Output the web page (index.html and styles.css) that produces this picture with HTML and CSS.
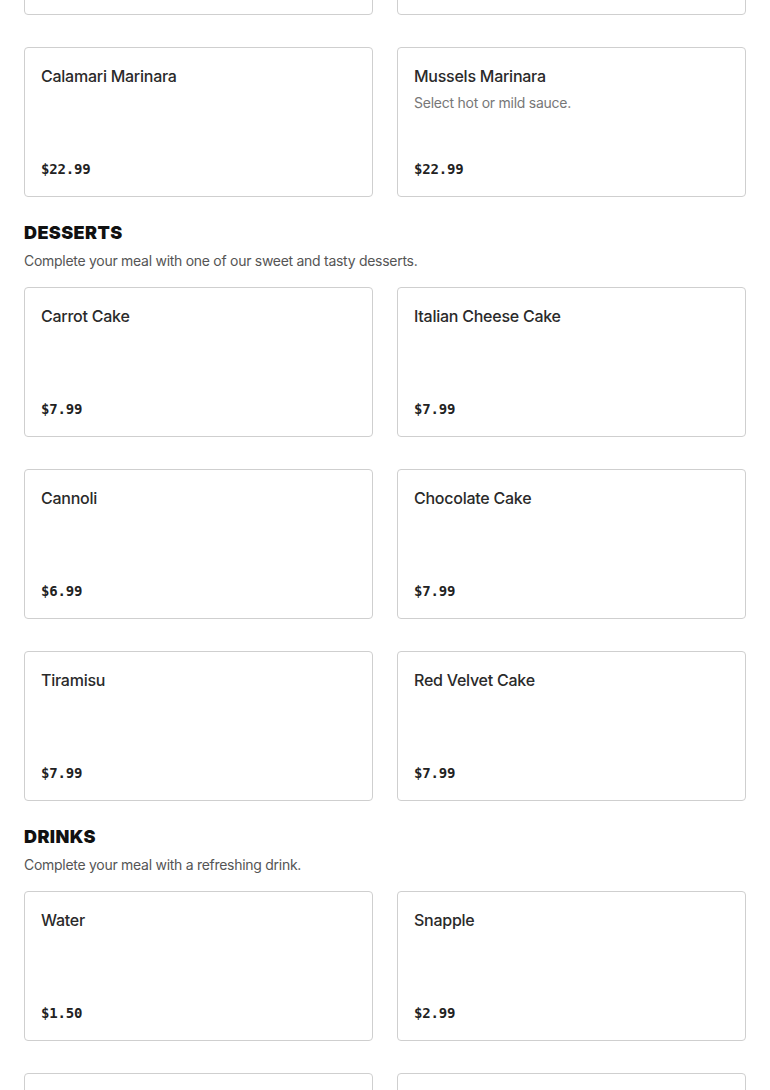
FILE: index.html
```html
<!DOCTYPE html>
<html lang="en">
<head>
    <meta charset="UTF-8">
    <meta name="viewport" content="width=device-width, initial-scale=1.0">
    <title>Menu</title>
    <link rel="stylesheet" href="styles.css">
</head>
<body>
    <main class="menu">
        <!-- Appetizers (scrolled past the top, only the last rows show) -->
        <div class="itemGrid firstGrid">
            <div class="item"></div>
            <div class="item"></div>
            <div class="item">
                <h3 class="itemName">Calamari Marinara</h3>
                <p class="itemPrice">$22.99</p>
            </div>
            <div class="item">
                <h3 class="itemName">Mussels Marinara</h3>
                <p class="itemDesc">Select hot or mild sauce.</p>
                <p class="itemPrice">$22.99</p>
            </div>
        </div>

        <!-- Desserts -->
        <section class="section">
            <h2 class="sectionTitle">DESSERTS</h2>
            <p class="sectionDesc">Complete your meal with one of our sweet and tasty desserts.</p>
            <div class="itemGrid">
                <div class="item">
                    <h3 class="itemName">Carrot Cake</h3>
                    <p class="itemPrice">$7.99</p>
                </div>
                <div class="item">
                    <h3 class="itemName">Italian Cheese Cake</h3>
                    <p class="itemPrice">$7.99</p>
                </div>
                <div class="item">
                    <h3 class="itemName">Cannoli</h3>
                    <p class="itemPrice">$6.99</p>
                </div>
                <div class="item">
                    <h3 class="itemName">Chocolate Cake</h3>
                    <p class="itemPrice">$7.99</p>
                </div>
                <div class="item">
                    <h3 class="itemName">Tiramisu</h3>
                    <p class="itemPrice">$7.99</p>
                </div>
                <div class="item">
                    <h3 class="itemName">Red Velvet Cake</h3>
                    <p class="itemPrice">$7.99</p>
                </div>
            </div>
        </section>

        <!-- Drinks -->
        <section class="section">
            <h2 class="sectionTitle">DRINKS</h2>
            <p class="sectionDesc">Complete your meal with a refreshing drink.</p>
            <div class="itemGrid">
                <div class="item">
                    <h3 class="itemName">Water</h3>
                    <p class="itemPrice">$1.50</p>
                </div>
                <div class="item">
                    <h3 class="itemName">Snapple</h3>
                    <p class="itemPrice">$2.99</p>
                </div>
                <div class="item"></div>
                <div class="item"></div>
            </div>
        </section>
    </main>
</body>
</html>
```

FILE: styles.css
```css
* {
    margin: 0;
    padding: 0;
    box-sizing: border-box;
}
body {
    font-family: Inter, "Noto Sans", Arial, sans-serif;
    color: #2a2a2a;
    background-color: #fff;
}
.menu {
    padding: 0 24px 40px 24px;
}
.firstGrid {
    margin-top: -135px;
}
.itemGrid {
    display: grid;
    grid-template-columns: repeat(2, 1fr);
    column-gap: 24px;
    row-gap: 32px;
}
.item {
    height: 150px;
    border: 1px solid #cfcfcf;
    border-radius: 4px;
    padding: 16px;
    display: flex;
    flex-direction: column;
}
.itemName {
    font-size: 16px;
    font-weight: 500;
    line-height: 24px;
    letter-spacing: -0.25px;
    color: #2a2a2a;
}
.itemDesc {
    font-size: 14px;
    line-height: 20px;
    letter-spacing: -0.25px;
    margin-top: 5px;
    color: #777;
}
.itemPrice {
    margin-top: auto;
    font-family: "DejaVu Sans Mono", "Liberation Mono", monospace;
    font-weight: bold;
    font-size: 14px;
    line-height: 20px;
    letter-spacing: -0.2px;
    padding-bottom: 1px;
    color: #222;
}
.section {
    margin-top: 24px;
}
.sectionTitle {
    font-size: 18px;
    font-weight: 900;
    line-height: 24px;
    letter-spacing: 0.4px;
    color: #111;
}
.sectionDesc {
    font-size: 14px;
    line-height: 20px;
    letter-spacing: -0.28px;
    margin-top: 6px;
    margin-bottom: 16px;
    color: #555;
}
```
